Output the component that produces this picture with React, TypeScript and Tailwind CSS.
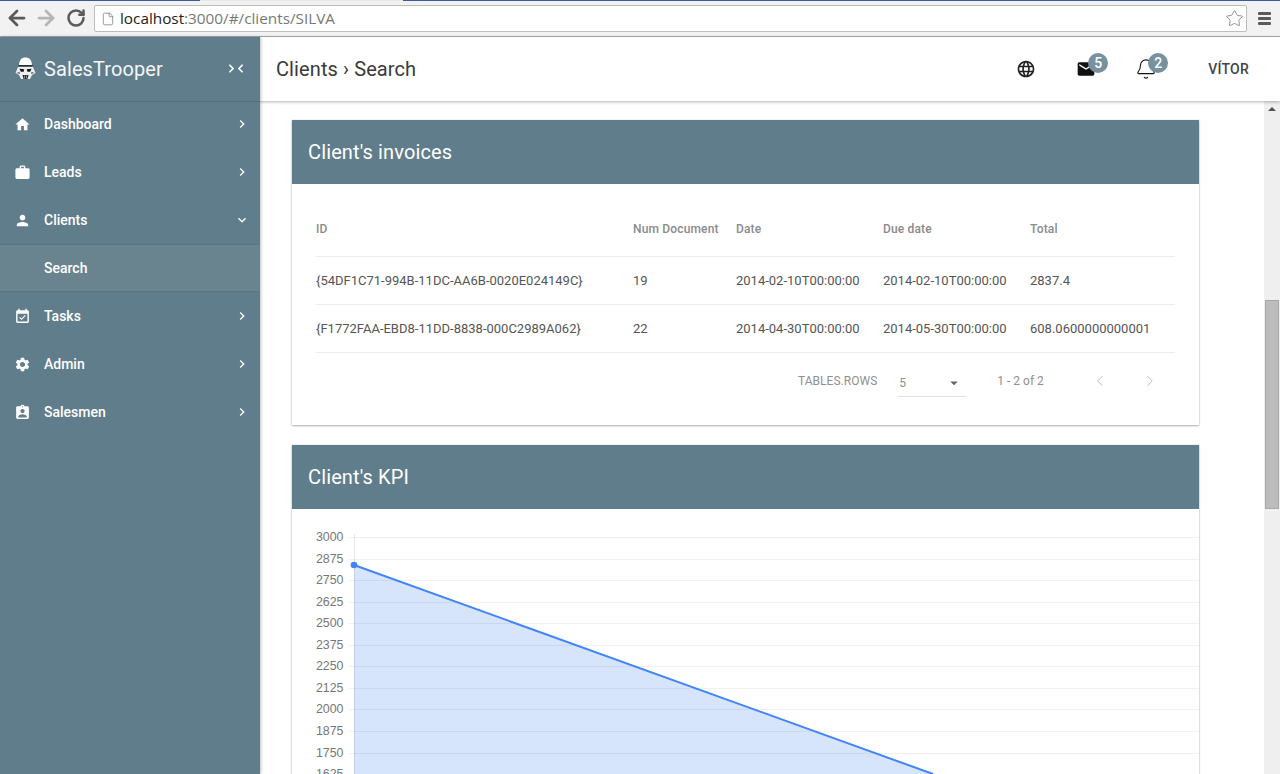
import { ReactNode } from 'react';
import { ArrowLeft, ArrowRight, Bell, ChevronLeft, ChevronRight, File, RotateCw, Star } from 'lucide-react';
import {
  MdHome,
  MdWork,
  MdPerson,
  MdEventAvailable,
  MdSettings,
  MdAssignmentInd,
  MdChevronRight,
  MdExpandMore,
  MdLanguage,
  MdEmail,
  MdArrowDropDown,
} from 'react-icons/md';

const navItems = [
  { label: 'Dashboard', icon: <MdHome size={17} /> },
  { label: 'Leads', icon: <MdWork size={17} /> },
  { label: 'Clients', icon: <MdPerson size={17} />, open: true },
  { label: 'Tasks', icon: <MdEventAvailable size={17} /> },
  { label: 'Admin', icon: <MdSettings size={17} /> },
  { label: 'Salesmen', icon: <MdAssignmentInd size={17} /> },
];

const invoices = [
  {
    id: '{54DF1C71-994B-11DC-AA6B-0020E024149C}',
    num: '19',
    date: '2014-02-10T00:00:00',
    due: '2014-02-10T00:00:00',
    total: '2837.4',
  },
  {
    id: '{F1772FAA-EBD8-11DD-8838-000C2989A062}',
    num: '22',
    date: '2014-04-30T00:00:00',
    due: '2014-05-30T00:00:00',
    total: '608.0600000000001',
  },
];

const ticks = ['3000', '2875', '2750', '2625', '2500', '2375', '2250', '2125', '2000', '1875', '1750', '1625'];

function Trooper() {
  return (
    <svg width="21" height="23" viewBox="0 0 21 23">
      {/* dome */}
      <path d="M4 9 C4 3 6.5 0.5 10.5 0.5 C14.5 0.5 17 3 17 9 Z" fill="#fff" />
      <rect x="3.5" y="8" width="14" height="1.3" fill="#2a2a2a" />
      {/* mask */}
      <path d="M3 10 L18 10 L20.5 16 L17 18 L15 22 L6 22 L4 18 L0.5 16 Z" fill="#eceff0" />
      <path d="M4.5 11.8 L9.3 12.2 L8.6 14.8 L5.8 14.8 Z M16.5 11.8 L11.7 12.2 L12.4 14.8 L15.2 14.8 Z" fill="#161616" />
      <path d="M1.5 16 L4.5 14.8 L5 17 Z M19.5 16 L16.5 14.8 L16 17 Z" fill="#666" />
      <path d="M7.5 18 H13.5 L12.5 22 H8.5 Z" fill="#2a2a2a" />
      <path d="M9.5 18.5 V21.5 M11.5 18.5 V21.5" stroke="#bbb" strokeWidth="0.7" />
    </svg>
  );
}

function NavRow({ label, icon, open }: { label: string; icon?: ReactNode; open?: boolean }) {
  return (
    <div className="h-12 flex items-center pl-[14px] pr-[10px] text-white text-[14px] font-medium">
      <span className="w-[30px] flex items-center">{icon}</span>
      <span className="flex-1">{label}</span>
      {open ? <MdExpandMore size={16} /> : <MdChevronRight size={16} />}
    </div>
  );
}

function Sidebar() {
  return (
    <aside className="w-[260px] shrink-0 bg-[#607d8b] shadow-[1px_0_3px_rgba(0,0,0,0.25)] z-20">
      <div className="h-[65px] pb-[1px] flex items-center pl-[15px] pr-[13px] border-b border-[#557180] text-white">
        <Trooper />
        <span className="ml-[8px] flex-1 text-[20px] tracking-[0.1px] text-[#f4f6f7]">SalesTrooper</span>
        <span className="flex items-center -space-x-[4px]">
          <ChevronRight size={13} strokeWidth={3.25} />
          <ChevronLeft size={13} strokeWidth={3.25} />
        </span>
      </div>
      <nav className="-mt-[2px]">
        {navItems.map((item) => (
          <div key={item.label}>
            <NavRow label={item.label} icon={item.icon} open={item.open} />
            {item.open && (
              <div className="h-12 flex items-center pl-11 bg-[#6a848f] border-y border-[#5a7582] text-white text-[14px] font-medium">
                Search
              </div>
            )}
          </div>
        ))}
      </nav>
    </aside>
  );
}

function Badge({ value, className }: { value: string; className: string }) {
  return (
    <span
      className={`absolute w-5 h-5 rounded-full bg-[#78919e] text-white text-[14px] font-medium flex items-center justify-center ${className}`}
    >
      {value}
    </span>
  );
}

function Topbar() {
  return (
    <header className="h-16 shrink-0 bg-white flex items-center pl-4 shadow-[0_1px_3px_rgba(0,0,0,0.3)] z-10">
      <h1 className="flex-1 text-[20px] tracking-[0.1px] text-[#3a3a3a]">Clients › Search</h1>
      <MdLanguage size={20} className="text-[#222] mr-[40px]" />
      <span className="relative mr-[39px] text-[#111]">
        <MdEmail size={20} />
        <Badge value="5" className="left-[12px] -top-[6px]" />
      </span>
      <span className="relative mr-[51px] text-[#111]">
        <Bell size={22} strokeWidth={1.2} />
        <Badge value="2" className="left-[13px] -top-[5px]" />
      </span>
      <span className="text-[14px] font-medium tracking-[0.25px] text-[#444] mr-[31px]">VÍTOR</span>
    </header>
  );
}

function Card({ title, children }: { title: string; children: ReactNode }) {
  return (
    <section className="bg-white shadow-[0_1px_2px_rgba(0,0,0,0.3),0_0_1px_rgba(0,0,0,0.2)]">
      <div className="h-16 bg-[#607d8b] text-white text-[20px] tracking-[0.13px] flex items-center pl-4">{title}</div>
      {children}
    </section>
  );
}

function InvoicesTable() {
  return (
    <div className="px-6 pt-[24px] h-[241px]">
      <table className="w-full text-left text-[13px] text-[#555] border-collapse">
        <thead>
          <tr className="h-[48px] border-b border-[#ececec] text-[12px] tracking-[0.16px] text-[#8a8a8a]">
            <th className="w-[317px] font-medium pb-[5px]">ID</th>
            <th className="w-[103px] font-medium pb-[5px]">Num Document</th>
            <th className="w-[147px] font-medium pb-[5px]">Date</th>
            <th className="w-[147px] font-medium pb-[5px]">Due date</th>
            <th className="font-medium pb-[5px]">Total</th>
          </tr>
        </thead>
        <tbody>
          {invoices.map((row) => (
            <tr key={row.id} className="h-12 border-b border-[#ececec]">
              <td className="pt-[2px]">{row.id}</td>
              <td className="pt-[2px]">{row.num}</td>
              <td className="pt-[2px]">{row.date}</td>
              <td className="pt-[2px]">{row.due}</td>
              <td className="pt-[2px]">{row.total}</td>
            </tr>
          ))}
        </tbody>
      </table>
      <div className="h-[56px] flex items-center text-[12px] text-[#8f8f8f]">
        <span className="ml-[482px] tracking-[0.03px]">TABLES.ROWS</span>
        <span className="ml-[21px] w-[68px] h-[31px] mt-[2px] pt-[3px] border-b border-[#e0e0e0] flex items-center justify-between pl-[1px] pr-[3px]">
          5
          <MdArrowDropDown size={18} className="text-[#666]" />
        </span>
        <span className="ml-[31px]">1 - 2 of 2</span>
        <ChevronLeft size={18} strokeWidth={1.25} className="ml-[47px] text-[#b8b8b8]" />
        <ChevronRight size={18} strokeWidth={1.25} className="ml-[32px] text-[#b8b8b8]" />
      </div>
    </div>
  );
}

function KpiChart() {
  return (
    <div className="h-[400px]">
      <svg width="907" height="400" viewBox="292 509 907 400" className="block">
        <path d="M354 565 L933 774 L933 909 L354 909 Z" fill="#d6e5fc" />
        {ticks.map((tick, i) => {
          const y = Math.round(537 + i * 21.55) + 0.5;
          return (
            <g key={tick}>
              <line x1={349} x2={1199} y1={y} y2={y} stroke="#000" strokeOpacity="0.055" />
              <text x={343.5} y={y + 3.5} textAnchor="end" fontSize="12.4" fontFamily="'Liberation Sans', sans-serif" fill="#777">
                {tick}
              </text>
            </g>
          );
        })}
        <line x1={354.5} x2={354.5} y1={534} y2={909} stroke="#000" strokeOpacity="0.09" />
        <line x1={354} y1={565} x2={933} y2={774} stroke="#4285f4" strokeWidth="2" />
        <circle cx={354} cy={565} r={3.3} fill="#4285f4" />
      </svg>
    </div>
  );
}

function BrowserBar() {
  return (
    <div className="h-[37px] shrink-0 bg-[#f2f2f2] border-b border-[#a8a8a8] relative flex items-center text-[#5a5a5a]">
      <div className="absolute top-0 left-0 right-0 h-[1px] bg-[#3b5a9a]" />
      <div className="absolute top-0 left-[200px] w-[203px] h-[1px] bg-[#e8e8e8]" />
      <ArrowLeft size={24} strokeWidth={2.75} className="ml-[5px] shrink-0" />
      <ArrowRight size={24} strokeWidth={2.75} className="ml-[5px] shrink-0 text-[#b5b5b5]" />
      <RotateCw size={20} strokeWidth={3} className="ml-[8px] shrink-0" />
      <div className="ml-[8px] w-[1153px] h-[27px] mt-[1px] bg-white border border-[#bdbdbd] rounded-[2px] flex items-center pl-[6px] pr-[2px] text-[15.3px] font-['Open_Sans',sans-serif]">
        <File size={14} strokeWidth={1.25} className="text-[#777] mr-[5px]" />
        <span className="flex-1 text-[#777]">
          <span className="text-[#222]">localhost</span>:3000/#/clients/SILVA
        </span>
        <Star size={19} strokeWidth={1} className="text-[#777]" />
      </div>
      {/* chrome menu, three thick bars */}
      <div className="ml-[11px] w-[13px] flex flex-col gap-[2px]">
        <div className="h-[3px] bg-[#5a5a5a] rounded-[1px]" />
        <div className="h-[3px] bg-[#5a5a5a] rounded-[1px]" />
        <div className="h-[3px] bg-[#5a5a5a] rounded-[1px]" />
      </div>
    </div>
  );
}

export default function App() {
  return (
    <div className="h-[774px] w-[1280px] overflow-hidden flex flex-col font-['Roboto',sans-serif]">
      <BrowserBar />
      <div className="flex flex-1 min-h-0">
        <Sidebar />
        <div className="flex-1 min-w-0 flex flex-col">
          <Topbar />
          <div className="flex-1 min-h-0 flex overflow-hidden">
            <main className="flex-1 min-w-0 bg-white pl-[32px] pr-[65px] pt-[19px] flex flex-col gap-5">
              <Card title="Client's invoices">
                <InvoicesTable />
              </Card>
              <Card title="Client's KPI">
                <KpiChart />
              </Card>
            </main>
            {/* fake window scrollbar */}
            <div className="w-4 shrink-0 bg-[#efefef] flex flex-col">
              <div className="h-4 flex items-center justify-center">
                <div className="w-0 h-0 border-x-[4px] border-x-transparent border-b-[4px] border-b-[#505050]" />
              </div>
              <div className="h-[209px] mt-[183px] mx-[1px] bg-[#bcbcbc] border border-[#a8a8a8]" />
            </div>
          </div>
        </div>
      </div>
    </div>
  );
}
